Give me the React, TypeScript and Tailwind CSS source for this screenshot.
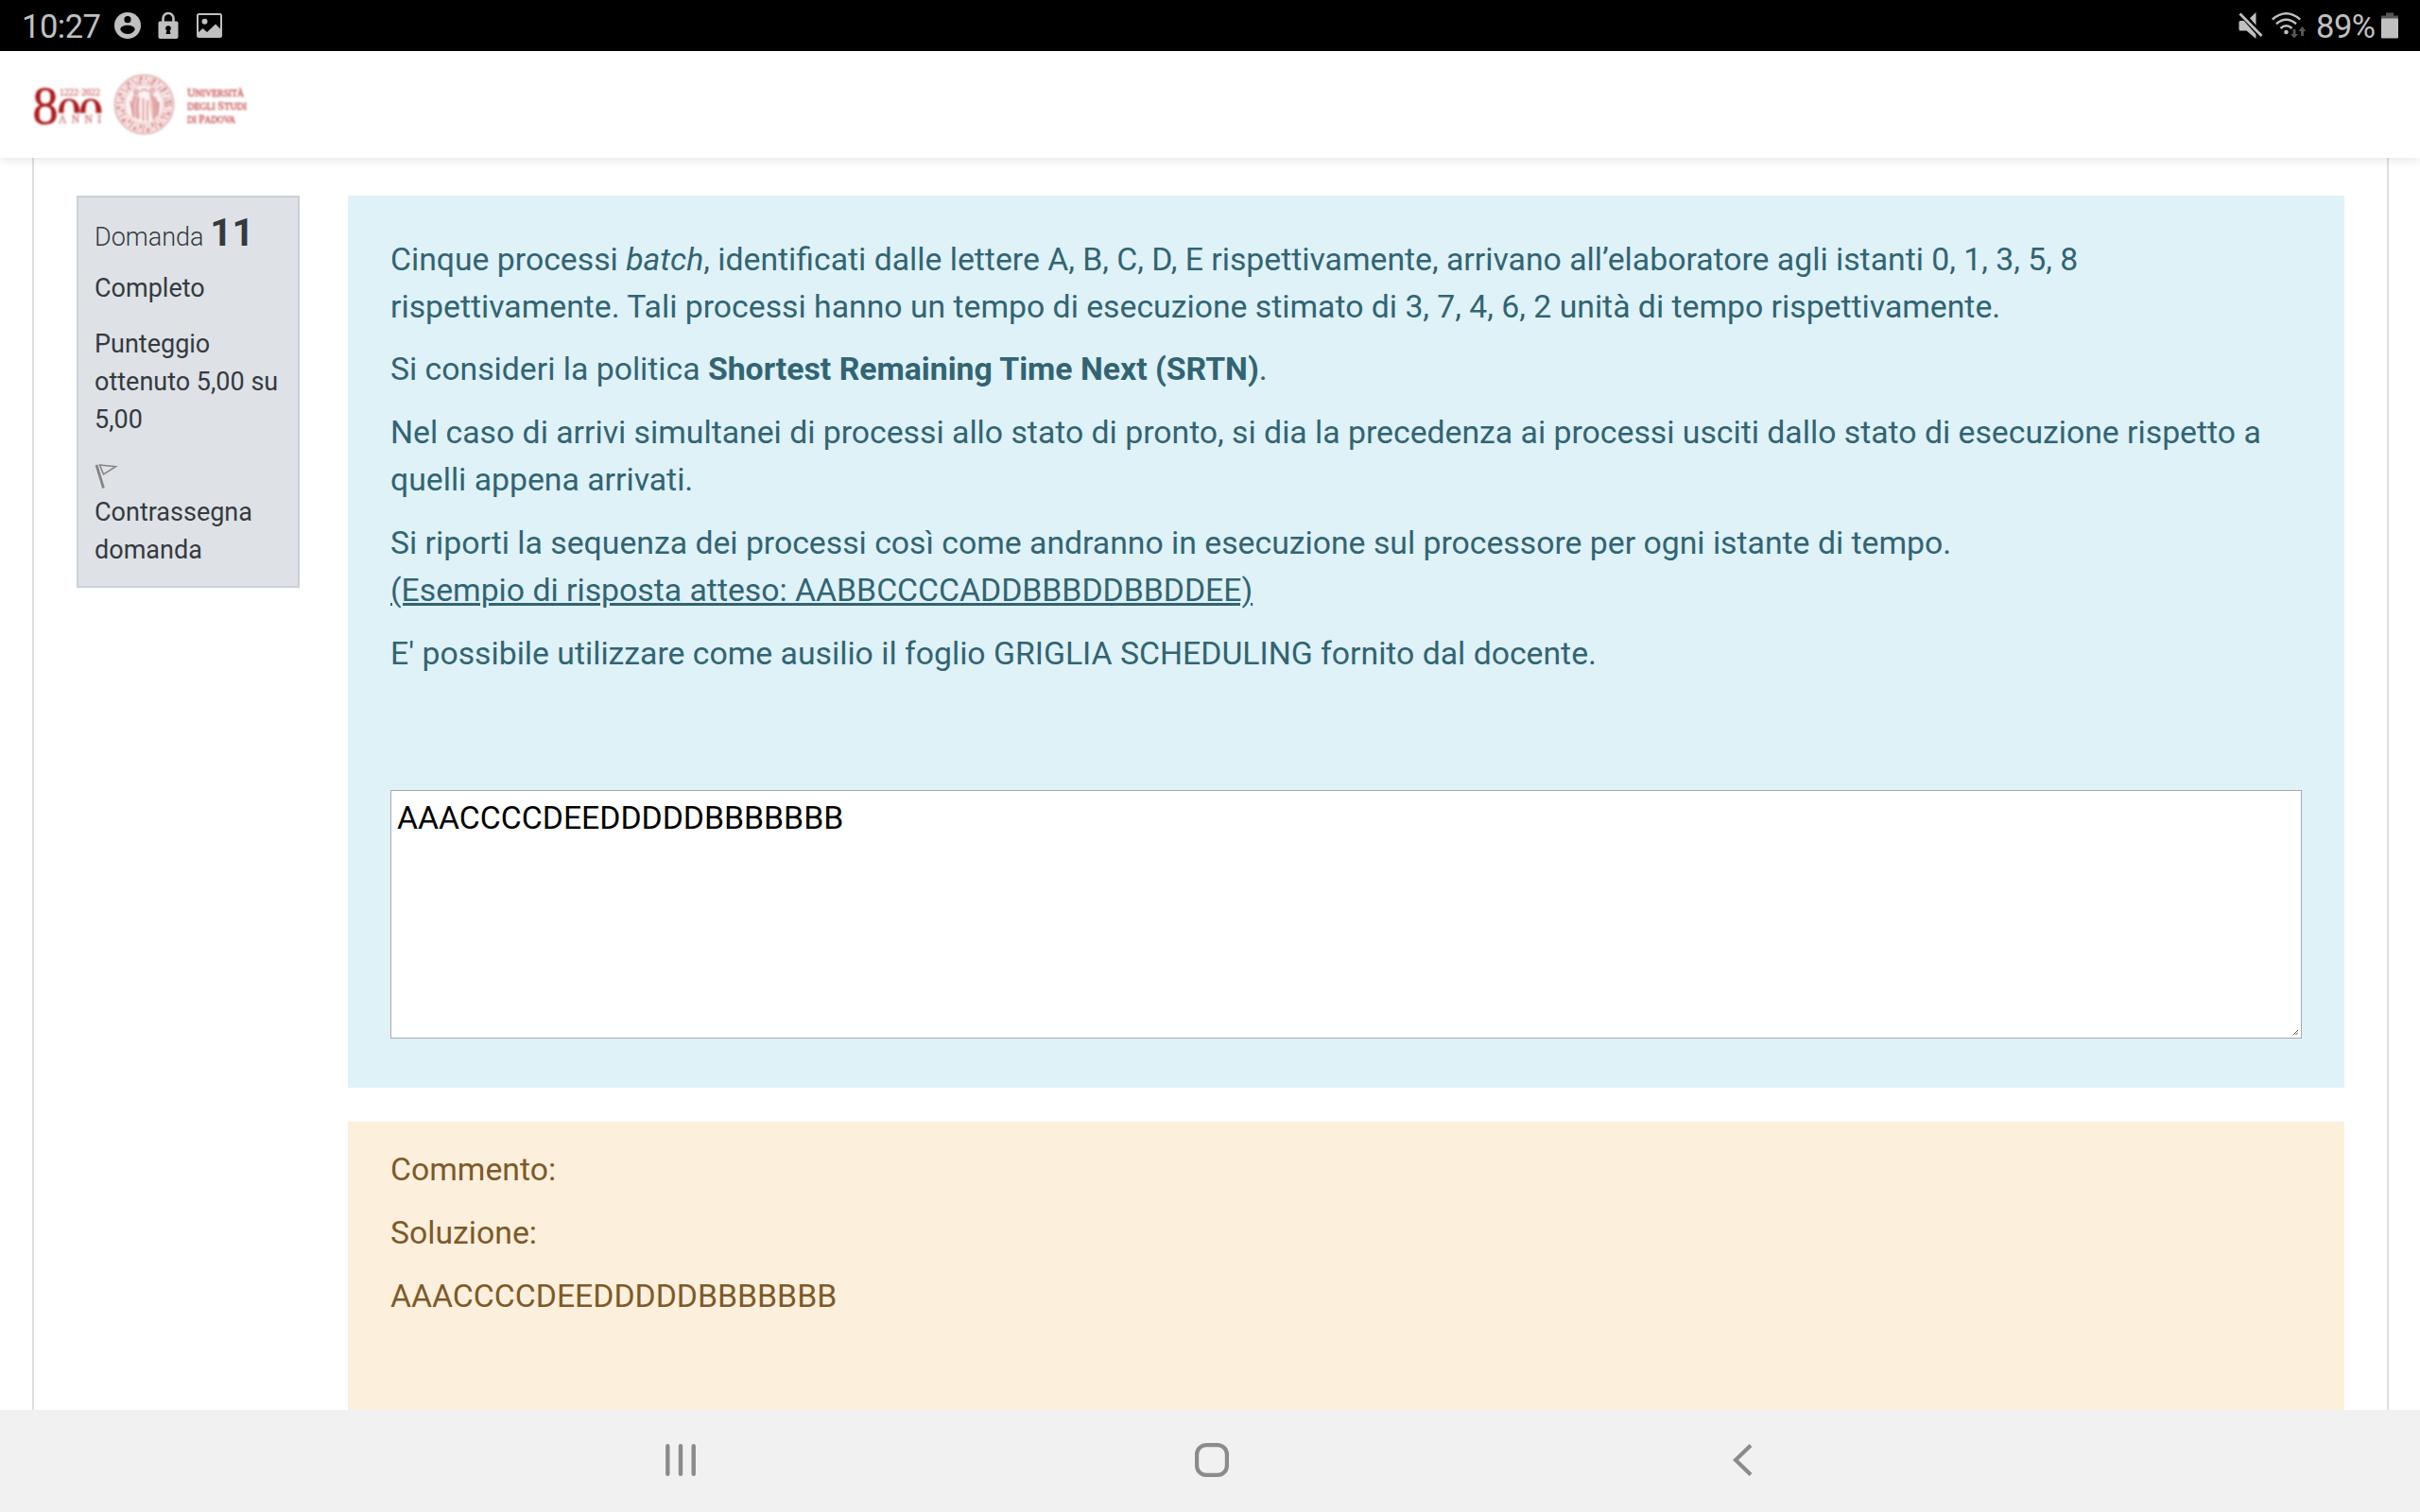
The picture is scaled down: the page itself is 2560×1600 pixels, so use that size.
import React from "react";

const GREY = "#c0c0c0";

function StatusBar() {
  return (
    <div className="flex h-[54px] shrink-0 items-center justify-between bg-black pl-[23px] pr-[23px] text-[#c0c0c0]">
      <div className="flex items-center">
        <span className="w-[85px] whitespace-nowrap pt-[2px] text-[34.5px] leading-[54px] tracking-[-0.5px]">10:27</span>
        <svg className="ml-[13px]" width="28" height="28" viewBox="0 0 28 28">
          <circle cx="14" cy="14" r="14" fill={GREY} />
          <circle cx="14" cy="7.7" r="3.6" fill="#000" />
          <path d="M6.3 18.4C6.3 15.4 9.6 13.8 14 13.8s7.7 1.6 7.7 4.6c-1.7 2.9-4.4 4.6-7.7 4.6s-6-1.7-7.7-4.6z" fill="#000" />
        </svg>
        <svg className="ml-[18px]" width="22" height="28" viewBox="0 0 22 28">
          <path d="M5.5 11V6.5a5.5 5.5 0 0 1 11 0V11" fill="none" stroke={GREY} strokeWidth="2.6" />
          <rect x="0.5" y="9.5" width="21" height="18.5" rx="2" fill={GREY} />
          <circle cx="11" cy="17" r="2.8" fill="#000" />
          <path d="M10 17h2l1.5 6h-5z" fill="#000" />
        </svg>
        <svg className="ml-[19px]" width="27" height="26" viewBox="0 0 27 26">
          <rect x="1" y="1" width="25" height="24" rx="1.5" fill="none" stroke={GREY} strokeWidth="2" />
          <circle cx="8.5" cy="8.8" r="3" fill={GREY} />
          <path d="M1 21l5.5-5 4.5 4 9-8.5 6 6V25H1z" fill={GREY} />
        </svg>
      </div>
      <div className="flex items-center">
        <svg width="26" height="28" viewBox="0 0 26 28">
          <path d="M0.5 10.5Q0.5 9 2 9h7L18.5 0v28L8.5 19.5H2Q0.5 19.5 0.5 18z" fill={GREY} />
          <path d="M-1 -3.5L27 28" stroke="#000" strokeWidth="6.5" />
          <path d="M6 0H16L12 5z" fill="#000" />
          <path d="M1.5 1.5L24.5 25" stroke={GREY} strokeWidth="2.8" />
        </svg>
        <svg className="ml-[9px]" width="36" height="28" viewBox="0 0 36 28">
          <g fill="none" stroke={GREY} strokeWidth="2.5">
            <path d="M0.8 7.6Q15.5-5 30.2 7.6" />
            <path d="M5 12.2Q15.5 3.2 26 12.2" />
            <path d="M9.5 17Q15.5 11.5 21.5 17" />
          </g>
          <circle cx="15.5" cy="21" r="2.3" fill={GREY} />
          <path d="M22.5 18h3v5h2.5l-4 4.5-4-4.5h2.5zM31 25h3v-5h2.3L32.5 15l-4 5h2.5z" fill="#555" />
        </svg>
        <span className="ml-[11px] w-[64px] whitespace-nowrap pt-[2px] text-[34.5px] leading-[54px] tracking-[-0.5px]">89%</span>
        <svg className="ml-[5px]" width="18" height="28" viewBox="0 0 18 28">
          <path d="M5 0.5h8v3h5V7H0V3.5h5z" fill="#555" />
          <rect y="6.5" width="18" height="21" rx="1" fill={GREY} />
        </svg>
      </div>
    </div>
  );
}

function Logo() {
  return (
    <svg className="blur-[0.8px]" width="230" height="70" viewBox="34 76 230 70" fontFamily="'Liberation Serif', serif">
      <text x="34.5" y="130.5" fontSize="57" fill="#ad1c1c" stroke="#ad1c1c" strokeWidth="0.5" textLength="27" lengthAdjust="spacingAndGlyphs">8</text>
      <g fill="#ad1c1c">
        <path d="M62 119.5C62 109 66.5 104.5 73 104.5S84.5 109 84.5 119.5H78.5C78.5 110 77 106.5 73 106.5S67.5 110 67.5 119.5z" />
        <path d="M85 119.5C85 109 89.5 104.5 96 104.5S107.5 109 107.5 119.5H101.5C101.5 110 100 106.5 96 106.5S90.5 110 90.5 119.5z" />
      </g>
      <g fill="#d07878" stroke="#d07878" strokeWidth="0.3">
        <text x="63" y="101" fontSize="10.5" textLength="43" lengthAdjust="spacingAndGlyphs">1222·2022</text>
        <text x="62" y="130" fontSize="11.5" textLength="45">ANNI</text>
      </g>
      <g>
        <circle cx="152.5" cy="110.5" r="31" fill="#fcf3f3" stroke="#dfa0a0" strokeWidth="1.5" />
        <circle cx="152.5" cy="110.5" r="27.5" fill="none" stroke="#da9494" strokeWidth="3.5" strokeDasharray="2 3 1 2 4 2.5" />
        <circle cx="152.5" cy="110.5" r="23.5" fill="none" stroke="#da9494" strokeWidth="3.5" strokeDasharray="3 2.5 1 3 2 1.5" />
        <circle cx="152.5" cy="110.5" r="20.5" fill="#fcf3f3" stroke="#e6b4b4" strokeWidth="1" />
        <path d="M140 102l4-5 3 5 1 24-8-2-1-8zM158 98l5 3 5 8-1 14-6 3-2-12z" fill="#ecc4c4" />
        <g fill="none" stroke="#d98f8f" strokeWidth="1.6">
          <path d="M143 102q-4 8-2 22M147 103q-3 10-1 23M160 100q5 10 3 27M164 103q4 10 2 20M151.5 104v24M156 106v22M138 107l3 14M168 108l-1 12" />
          <path d="M148 97q5-5 9 0" />
          <circle cx="144" cy="97" r="2" />
          <circle cx="161" cy="96" r="2" />
        </g>
      </g>
      <g fill="#c85454" stroke="#c85454" strokeWidth="0.4">
        <text x="198" y="101.5" fontSize="13" textLength="60" lengthAdjust="spacingAndGlyphs"><tspan>U</tspan><tspan fontSize="10.5">NIVERSITÀ</tspan></text>
        <text x="198" y="115.5" fontSize="13" textLength="63" lengthAdjust="spacingAndGlyphs"><tspan fontSize="10.5">DEGLI </tspan><tspan>S</tspan><tspan fontSize="10.5">TUDI</tspan></text>
        <text x="198" y="130" fontSize="13" textLength="51" lengthAdjust="spacingAndGlyphs"><tspan fontSize="10.5">DI </tspan><tspan>P</tspan><tspan fontSize="10.5">ADOVA</tspan></text>
      </g>
    </svg>
  );
}

function QuestionInfo() {
  return (
    <div className="h-[415px] w-[236px] shrink-0 border-2 border-[#cad0d7] bg-[#dee2e6] px-[17px] pt-[15px] text-[27px] leading-[40px] text-[#343a40]">
      <h3 className="h-[49px] whitespace-nowrap font-light leading-[44px]">
        Domanda <span className="text-[40.5px] font-bold leading-[44px]">11</span>
      </h3>
      <div className="mt-[12px]">Completo</div>
      <div className="mt-[19px]">
        Punteggio
        <br />
        ottenuto 5,00 su
        <br />
        5,00
      </div>
      <div className="mt-[27px]">
        <svg className="mb-[4px] mt-[18px]" width="27" height="27" viewBox="0 0 27 27" fill="none">
          <path d="M2 1L9.5 25.5" stroke="#848484" strokeWidth="2.8" />
          <path d="M5.5 1L22.5 2.7L9.5 11z" stroke="#848484" strokeWidth="1.5" />
        </svg>
        Contrassegna
        <br />
        domanda
      </div>
    </div>
  );
}

export default function App() {
  return (
    <div className="flex h-[1600px] w-[2560px] flex-col overflow-hidden bg-white font-['Roboto',sans-serif]">
      <StatusBar />
      <header className="z-10 flex h-[113px] shrink-0 items-center bg-white pl-[34px] shadow-[0_4px_9px_rgba(0,0,0,0.08)]">
        <Logo />
      </header>
      <main className="ml-[34px] mr-[33px] flex min-h-0 flex-1 items-start border-x-2 border-[#dfdfdf] pl-[45px] pt-[40px]">
        <QuestionInfo />
        <div className="ml-[51px] flex w-[2112px] shrink-0 flex-col text-[33.75px] leading-[50px]">
          <section className="h-[944px] bg-[#def2f8] px-[45px] pt-[43px] text-[#326472]">
            <p className="mb-[16px]">
              Cinque processi <em>batch</em>, identificati dalle lettere A, B, C, D, E rispettivamente, arrivano all’elaboratore agli istanti 0, 1, 3, 5, 8
              <br />
              rispettivamente. Tali processi hanno un tempo di esecuzione stimato di 3, 7, 4, 6, 2 unità di tempo rispettivamente.
            </p>
            <p className="mb-[17px]">
              Si consideri la politica <b>Shortest Remaining Time Next (SRTN)</b>.
            </p>
            <p className="mb-[17px] whitespace-nowrap">
              Nel caso di arrivi simultanei di processi allo stato di pronto, si dia la precedenza ai processi usciti dallo stato di esecuzione rispetto a
              <br />
              quelli appena arrivati.
            </p>
            <p className="mb-[17px]">
              Si riporti la sequenza dei processi così come andranno in esecuzione sul processore per ogni istante di tempo.
              <br />
              <span className="underline">(Esempio di risposta atteso: AABBCCCCADDBBBDDBBDDEE)</span>
            </p>
            <p>E' possibile utilizzare come ausilio il foglio GRIGLIA SCHEDULING fornito dal docente.</p>
            <div className="mt-[119px] flex h-[263px] items-start justify-between border border-[#a5abad] bg-white pl-[6px] text-black">
              <span className="pt-[4px]">AAACCCCDEEDDDDDBBBBBBB</span>
              <svg className="mr-[3px] mt-[253px]" width="5" height="5" viewBox="0 0 5 5" stroke="#555" strokeWidth="1">
                <path d="M0 5L5 0M2.5 5L5 2.5" />
              </svg>
            </div>
          </section>
          <section className="mt-[36px] h-[305px] bg-[#fcefdc] px-[45px] pt-[26px] text-[#7d5a29]">
            <p className="mb-[16.8px]">Commento:</p>
            <p className="mb-[16.8px]">Soluzione:</p>
            <p>AAACCCCDEEDDDDDBBBBBBB</p>
          </section>
        </div>
      </main>
      <nav className="flex h-[108px] shrink-0 items-center bg-[#f1f1f1] pb-[2px] pl-[704px]">
        <svg width="32" height="34" viewBox="0 0 32 34" stroke="#8b8b8b" strokeWidth="4.4" strokeLinecap="round">
          <path d="M2.3 2.3v29.4M16 2.3v29.4M29.7 2.3v29.4" />
        </svg>
        <svg className="ml-[528px]" width="36" height="36" viewBox="0 0 36 36" fill="none" stroke="#8b8b8b" strokeWidth="4.2">
          <rect x="2.1" y="2.1" width="31.8" height="31.8" rx="10" />
        </svg>
        <svg className="ml-[533px]" width="21" height="34" viewBox="0 0 21 34" fill="none" stroke="#8b8b8b" strokeWidth="4.2">
          <path d="M19 1.5L3 17L19 32.5" />
        </svg>
      </nav>
    </div>
  );
}
